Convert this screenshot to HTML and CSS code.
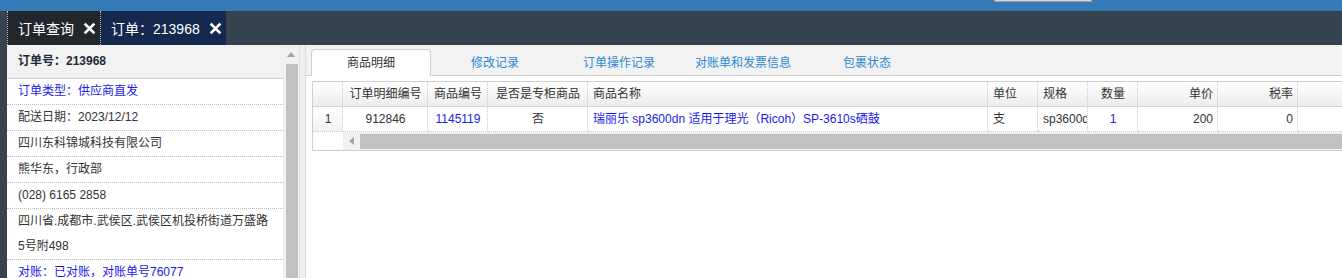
FILE: index.html
```html
<!DOCTYPE html>
<html lang="zh-CN">
<head>
    <meta charset="UTF-8">
    <title>订单：213968</title>
    <link rel="stylesheet" href="styles.css">
</head>
<body>

    <div class="topbar">
        <div class="search-stub"></div>
    </div>

    <div class="tabbar">
        <div class="page-tab first">订单查询
            <svg class="close" viewBox="0 0 12 12"><path d="M1.5 1.5 L10.5 10.5 M10.5 1.5 L1.5 10.5"/></svg>
        </div>
        <div class="page-tab current">订单：213968
            <svg class="close" viewBox="0 0 12 12"><path d="M1.5 1.5 L10.5 10.5 M10.5 1.5 L1.5 10.5"/></svg>
        </div>
    </div>

    <div class="workspace">
        <div class="side">
            <div class="side-list">
                <div class="side-head">订单号：213968</div>
                <div class="side-row link">订单类型：供应商直发</div>
                <div class="side-row">配送日期：2023/12/12</div>
                <div class="side-row">四川东科锦城科技有限公司</div>
                <div class="side-row">熊华东，行政部</div>
                <div class="side-row">(028) 6165 2858</div>
                <div class="side-row">四川省.成都市.武侯区.武侯区机投桥街道万盛路5号附498</div>
                <div class="side-row link">对账：已对账，对账单号76077</div>
            </div>
            <div class="vscroll">
                <div class="arrow-up"></div>
                <div class="vthumb"></div>
            </div>
        </div>

        <div class="splitter"></div>

        <div class="main">
            <div class="subtabs">
                <div class="subtab active">商品明细</div>
                <div class="subtab">修改记录</div>
                <div class="subtab">订单操作记录</div>
                <div class="subtab">对账单和发票信息</div>
                <div class="subtab">包裹状态</div>
            </div>

            <div class="grid">
                <table>
                    <thead>
                        <tr>
                            <th class="c-num"></th>
                            <th class="c-detail center">订单明细编号</th>
                            <th class="c-code center">商品编号</th>
                            <th class="c-flag center">是否是专柜商品</th>
                            <th class="c-name">商品名称</th>
                            <th class="c-unit">单位</th>
                            <th class="c-spec">规格</th>
                            <th class="c-qty center">数量</th>
                            <th class="c-price right">单价</th>
                            <th class="c-tax right">税率</th>
                            <th class="c-rest"></th>
                        </tr>
                    </thead>
                    <tbody>
                        <tr>
                            <td class="rownum">1</td>
                            <td class="center">912846</td>
                            <td class="center link">1145119</td>
                            <td class="center">否</td>
                            <td class="link">瑞丽乐 sp3600dn 适用于理光（Ricoh）SP-3610s硒鼓</td>
                            <td>支</td>
                            <td>sp3600dn</td>
                            <td class="center link">1</td>
                            <td class="right">200</td>
                            <td class="right">0</td>
                            <td></td>
                        </tr>
                    </tbody>
                </table>
                <div class="hscroll">
                    <div class="hscroll-pad"></div>
                    <div class="hscroll-btn"><span class="arrow-left"></span></div>
                    <div class="hthumb"></div>
                </div>
            </div>
        </div>
    </div>

</body>
</html>
```

FILE: styles.css
```css
html, body {
    margin: 0;
    height: 100%;
}
body {
    font-family: 'Liberation Sans', 'Noto Sans CJK SC', sans-serif;
    font-size: 12px;
    color: #333;
    background-color: #37424f;
    overflow: hidden;
    display: flex;
    flex-direction: column;
}
.topbar {
    height: 11px;
    background-color: #337ab7;
    display: flex;
}
.search-stub {
    width: 96px;
    height: 1px;
    margin-left: 994px;
    background-color: #d6d6d6;
    border: 0 solid #9a9a9a;
    border-width: 0 1px 1px;
}
.tabbar {
    height: 34px;
    display: flex;
    padding-left: 7px;
}
.page-tab {
    display: flex;
    align-items: center;
    box-sizing: border-box;
    height: 34px;
    padding-left: 10px;
    color: #fff;
    font-size: 14px;
}
.page-tab.first {
    width: 94px;
    background-color: #22272e;
    border-left: 1px dotted #bbb;
    border-right: 1px dotted #bbb;
}
.page-tab.current {
    width: 125px;
    background-color: #15294e;
}
.close {
    width: 13px;
    height: 13px;
    margin-left: 9px;
    fill: none;
    stroke: #fff;
    stroke-width: 2.6;
}
.workspace {
    flex: 1;
    display: flex;
    padding-left: 7px;
    min-height: 0;
}
.side {
    width: 293px;
    display: flex;
    background: #fff;
    border-right: 1px solid #e2e2e2;
    box-sizing: border-box;
}
.side-list {
    flex: 1;
}
.side-head {
    height: 33px;
    line-height: 33px;
    padding-left: 11px;
    background-color: #f2f2f2;
    border-bottom: 1px solid #cfcfcf;
    font-weight: bold;
    color: #1e2a3a;
}
.side-row {
    line-height: 25px;
    padding: 0 11px 0 11px;
    border-bottom: 1px dotted #bdbdbd;
}
.side-row.link {
    color: #1a1aee;
}
.vscroll {
    width: 16px;
    background-color: #f1f1f1;
    display: flex;
    flex-direction: column;
    align-items: center;
}
.arrow-up {
    margin: 7px 0 7px;
    border: 4px solid transparent;
    border-top: 0;
    border-bottom: 5px solid #a3a3a3;
}
.vthumb {
    width: 12px;
    flex: 1;
    margin-left: 1px;
    background-color: #c1c1c1;
}
.splitter {
    width: 5px;
    background-color: #efefef;
}
.main {
    flex: 1;
    background: #fff;
    border-left: 1px solid #d9d9d9;
    overflow: hidden;
}
.subtabs {
    display: flex;
    gap: 4px;
    padding: 4px 0 0 5px;
    background-color: #f2f2f2;
    border-bottom: 1px solid #cfcfcf;
    height: 26px;
}
.subtab {
    box-sizing: border-box;
    width: 120px;
    height: 27px;
    line-height: 26px;
    text-align: center;
    color: #2a88d2;
    border: 1px solid transparent;
    border-bottom: 0;
}
.subtab.active {
    color: #333;
    background: #fff;
    border-color: #cfcfcf;
    border-radius: 4px 4px 0 0;
}
.grid {
    margin: 5px -20px 0 6px;
    border: 1px solid #cfcfcf;
    border-right: 0;
}
table {
    border-collapse: separate;
    border-spacing: 0;
    table-layout: fixed;
    width: 1065px;
}
th, td {
    box-sizing: border-box;
    padding: 0 4px 0 5px;
    line-height: 24px;
    white-space: nowrap;
    overflow: hidden;
    text-align: left;
    border-right: 1px dotted #c8c8c8;
    font-weight: normal;
}
th {
    background: linear-gradient(#ffffff, #ededed);
    border-bottom: 1px solid #d3d3d3;
}
td {
    border-bottom: 1px dotted #c8c8c8;
}
.center { text-align: center; }
.right { text-align: right; }
td.link { color: #1a1aee; }
td.rownum {
    text-align: center;
    background: linear-gradient(#fdfdfd, #f3f3f3);
}
.c-num { width: 30px; }
.c-detail { width: 85px; }
.c-code { width: 60px; }
.c-flag { width: 100px; }
.c-name { width: 400px; }
.c-unit { width: 50px; }
.c-spec { width: 50px; }
.c-qty { width: 50px; }
.c-price { width: 80px; }
.c-tax { width: 80px; }
.c-rest { width: 80px; border-right: 0; }
.hscroll {
    height: 18px;
    display: flex;
}
.hscroll-pad {
    width: 30px;
    background: #fff;
}
.hscroll-btn {
    width: 17px;
    background-color: #f1f1f1;
    display: flex;
    align-items: center;
    justify-content: center;
}
.arrow-left {
    border: 4px solid transparent;
    border-left: 0;
    border-right: 5px solid #a3a3a3;
}
.hthumb {
    flex: 1;
    margin: 2px 0 1px;
    background-color: #c1c1c1;
    box-shadow: 0 -2px 0 #f1f1f1, 0 1px 0 #f1f1f1;
}
```
